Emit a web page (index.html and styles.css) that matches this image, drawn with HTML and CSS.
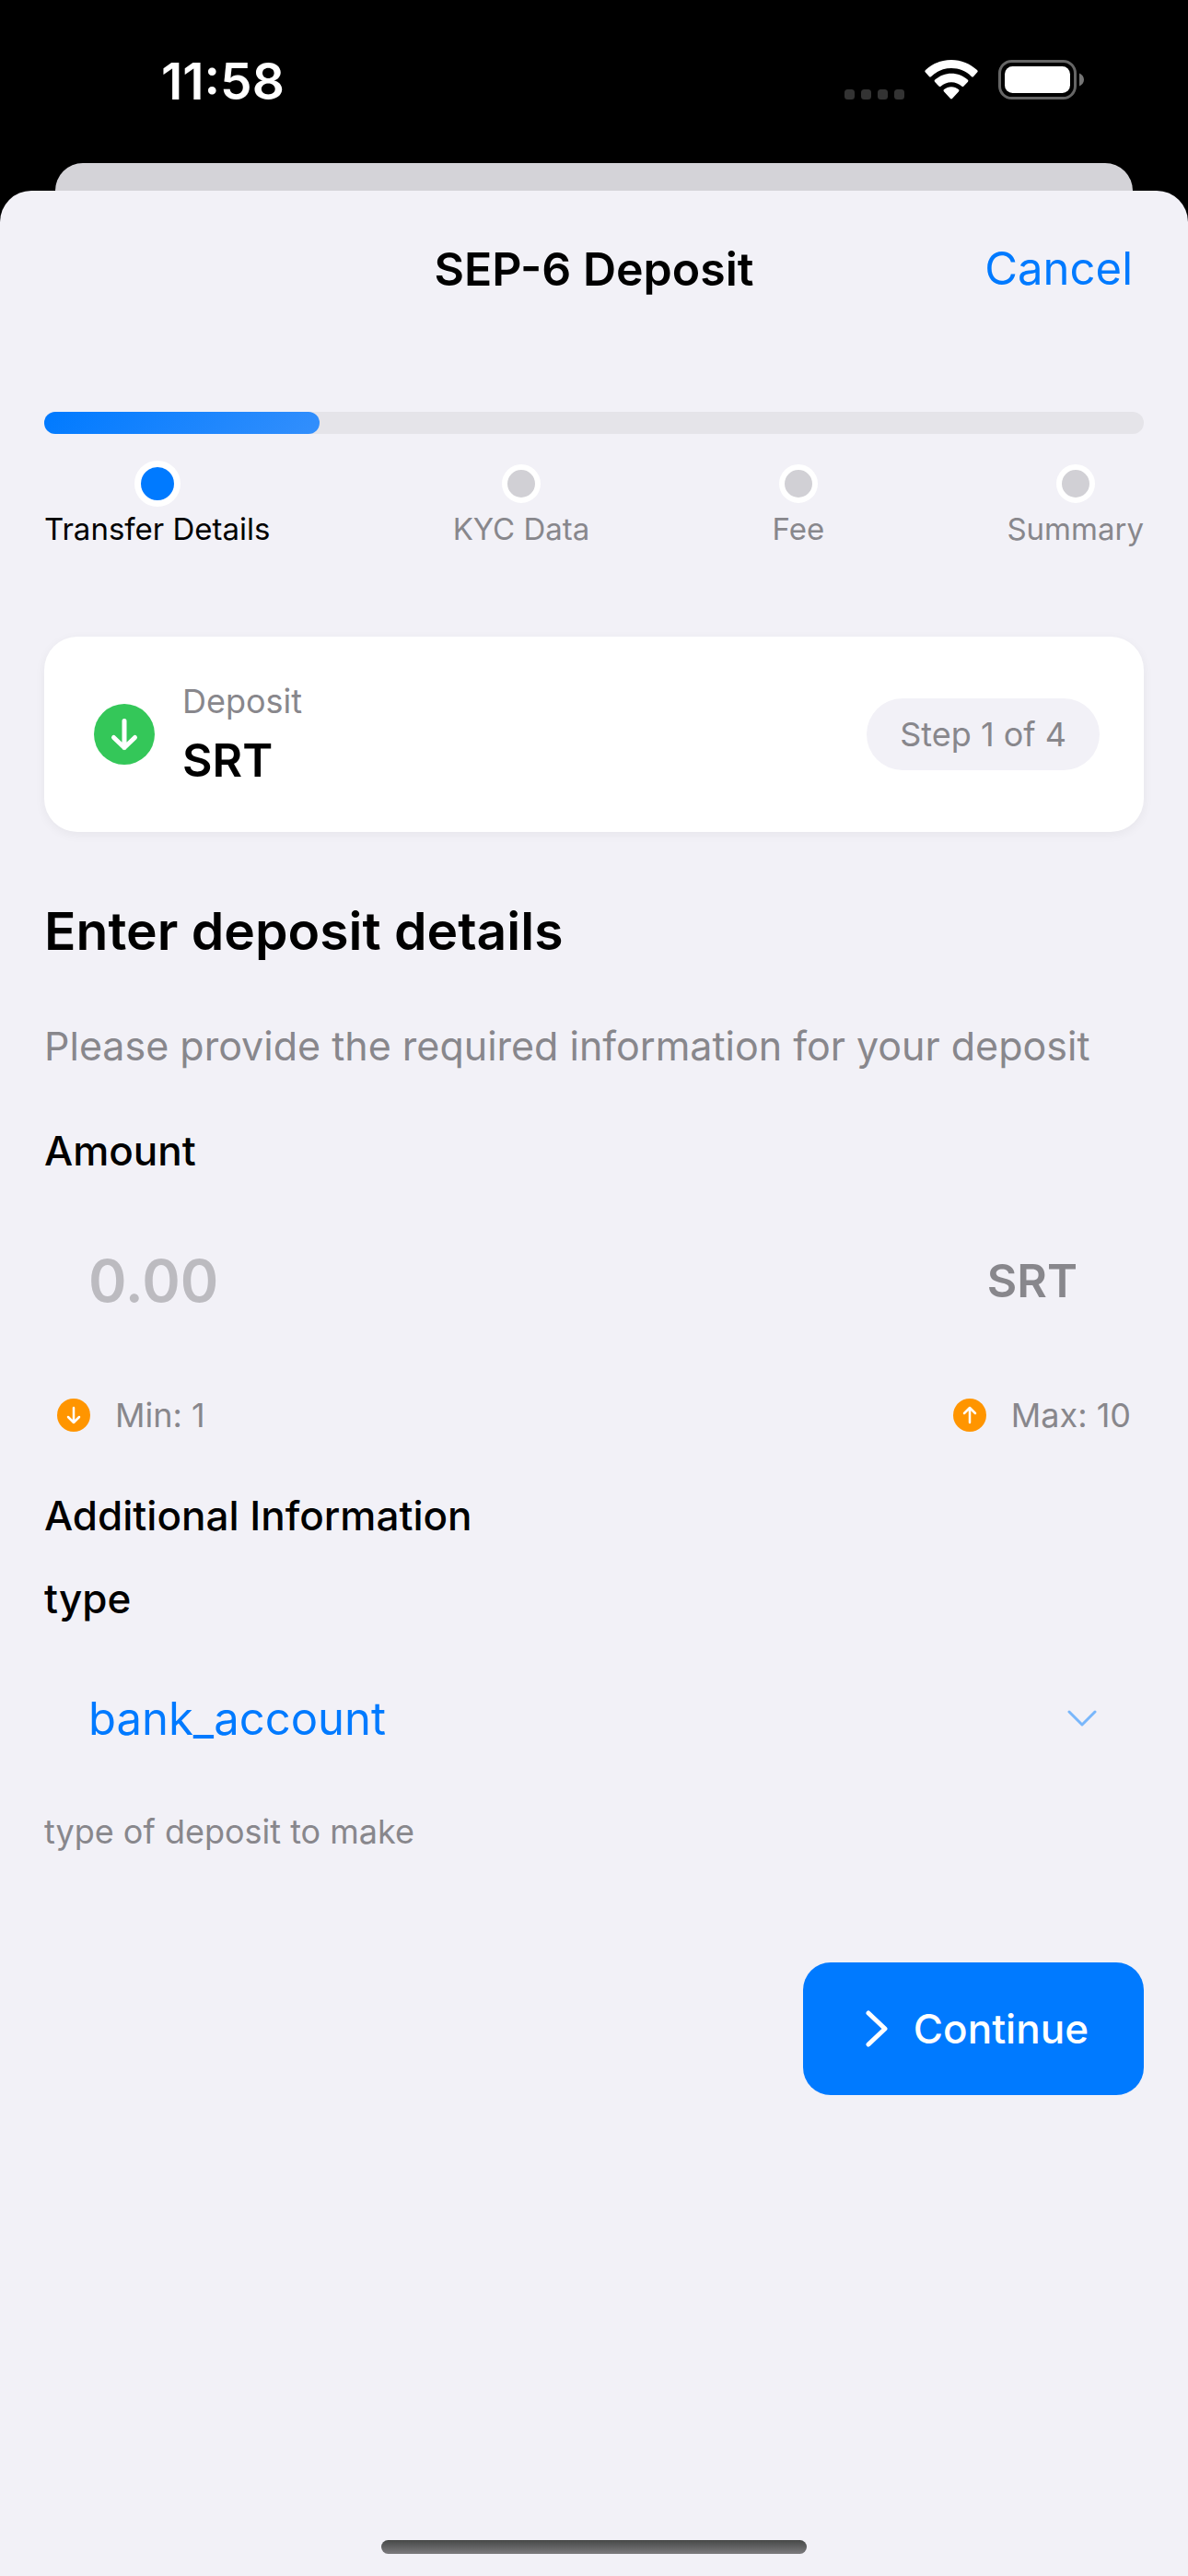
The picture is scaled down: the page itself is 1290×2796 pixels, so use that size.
FILE: index.html
```html
<!DOCTYPE html>
<html lang="en">
<head>
<meta charset="utf-8">
<meta name="viewport" content="width=device-width, initial-scale=1">
<title>SEP-6 Deposit</title>
<link rel="stylesheet" href="styles.css">
</head>
<body>
<header class="status-bar">
  <time class="clock">11:58</time>
  <div class="status-icons">
    <svg class="signal" width="65" height="11" viewBox="0 0 65 11" aria-hidden="true"><g fill="#333"><rect width="11" height="11" rx="3.5"/><rect x="18" width="11" height="11" rx="3.5"/><rect x="36" width="11" height="11" rx="3.5"/><rect x="54" width="11" height="11" rx="3.5"/></g></svg>
    <svg width="58" height="43" viewBox="0 0 58 43" aria-hidden="true"><g fill="#fff"><path d="M29 0c10.800 0 20.600 4.200 28 11.100.9.800.9 1.700.1 2.500l-4 4.300c-.7.700-1.500.7-2.300 0C45 12.400 37.400 9.100 29 9.100S13 12.400 7.200 17.900c-.8.700-1.600.7-2.300 0l-4-4.300c-.8-.8-.8-1.700.1-2.500C8.400 4.200 18.200 0 29 0z"/><path d="M29 14.700c6.800 0 13 2.600 17.700 6.900.9.800.9 1.600.1 2.500l-4.300 4.400c-.8.800-1.500.7-2.300 0-3-2.700-6.900-4.300-11.200-4.300s-8.200 1.600-11.200 4.300c-.8.700-1.500.8-2.300 0l-4.300-4.400c-.8-.9-.8-1.700.1-2.500 4.700-4.300 10.900-6.900 17.700-6.900z"/><path d="M29 29.200c3 0 5.700 1.100 7.800 2.900.9.800.9 1.600.1 2.400l-6.700 7.300c-.8.900-1.600.9-2.400 0l-6.700-7.300c-.8-.8-.8-1.600.1-2.400 2.100-1.800 4.800-2.900 7.800-2.900z"/></g></svg>
    <svg width="93" height="43" viewBox="0 0 93 43" aria-hidden="true"><rect x="1.500" y="1.500" width="82" height="40" rx="13" fill="none" stroke="#666" stroke-width="3"/><rect x="7" y="7" width="71" height="29" rx="8.500" fill="#fff"/><path d="M88 14.500c3 1.200 5 4 5 7s-2 5.800-5 7z" fill="#757575"/></svg>
  </div>
</header>
<div class="sheet-behind"></div>
<div class="sheet">
  <nav class="nav-bar">
    <h1 class="nav-title">SEP-6 Deposit</h1>
    <button class="cancel" type="button">Cancel</button>
  </nav>
  <main class="content">
    <div class="track"><div class="track-fill" style="width:25%"></div></div>
    <ol class="steps">
      <li class="step step-active"><span class="dot-box"><span class="dot"></span></span>Transfer Details</li>
      <li class="step"><span class="dot-box"><span class="dot"></span></span>KYC Data</li>
      <li class="step"><span class="dot-box"><span class="dot"></span></span>Fee</li>
      <li class="step"><span class="dot-box"><span class="dot"></span></span>Summary</li>
    </ol>

    <section class="card">
      <svg width="66" height="66" viewBox="0 0 66 66" aria-hidden="true"><circle cx="33" cy="33" r="33" fill="#34c759"/><path d="M33 18.500v29M21.500 36.500L33 47.500l11.500-11" fill="none" stroke="#fff" stroke-width="5" stroke-linecap="round" stroke-linejoin="round"/></svg>
      <div class="card-text">
        <span class="card-label">Deposit</span>
        <strong class="card-asset">SRT</strong>
      </div>
      <span class="pill">Step 1 of 4</span>
    </section>

    <h2 class="heading">Enter deposit details</h2>
    <p class="lead">Please provide the required information for your deposit</p>

    <form class="form">
      <label class="field-label" for="amount">Amount</label>
      <div class="amount-row">
        <input class="amount" id="amount" type="text" inputmode="decimal" placeholder="0.00">
        <span class="unit">SRT</span>
      </div>
      <div class="limits">
        <span class="limit"><svg width="36" height="36" viewBox="0 0 36 36" aria-hidden="true"><circle cx="18" cy="18" r="18" fill="#ff9500"/><path d="M18 10v16M12 20l6 6 6-6" fill="none" stroke="#fff" stroke-width="2.500" stroke-linecap="round" stroke-linejoin="round"/></svg>Min: 1</span>
        <span class="limit"><svg width="36" height="36" viewBox="0 0 36 36" aria-hidden="true"><circle cx="18" cy="18" r="18" fill="#ff9500"/><path d="M18 26V10M12 16l6-6 6 6" fill="none" stroke="#fff" stroke-width="2.500" stroke-linecap="round" stroke-linejoin="round"/></svg>Max: 10</span>
      </div>

      <h3 class="section-title">Additional Information</h3>
      <label class="field-label" for="type">type</label>
      <div class="select-row">
        <select class="select" id="type"><option>bank_account</option></select>
        <svg class="select-arrow" width="32" height="18" viewBox="0 0 32 18" aria-hidden="true"><path d="M2 2l14 14L30 2" fill="none" stroke="#79b7fb" stroke-width="3" stroke-linecap="round" stroke-linejoin="round"/></svg>
      </div>
      <p class="hint">type of deposit to make</p>

      <button class="continue" type="button">
        <svg width="24" height="40" viewBox="0 0 24 40" aria-hidden="true"><path d="M3 3l18 17L3 37" fill="none" stroke="#fff" stroke-width="5" stroke-linecap="round" stroke-linejoin="round"/></svg>
        Continue
      </button>
    </form>
  </main>
  <div class="home-indicator"></div>
</div>
</body>
</html>
```
FILE: styles.css
```css
* {
  box-sizing: border-box;
}

body {
  margin: 0;
  min-height: 100vh;
  display: flex;
  flex-direction: column;
  background: #000;
  color: #000;
  font-family: Inter, "Liberation Sans", sans-serif;
}

h1, h2, h3, p, ol {
  margin: 0;
  padding: 0;
}

button, input, select {
  padding: 0;
  border: 0;
  background: none;
  font-family: inherit;
}

svg {
  flex: none;
}

.status-bar {
  display: flex;
  justify-content: space-between;
  align-items: flex-start;
  height: 177px;
  padding: 58px 113px 0 175px;
  color: #fff;
}

.clock {
  font-size: 55px;
  font-weight: 600;
  line-height: 60px;
}

.status-icons {
  display: flex;
  align-items: flex-end;
  gap: 22px;
  padding-top: 7px;
}

.sheet-behind {
  height: 30px;
  margin: 0 60px;
  border-radius: 30px 30px 0 0;
  background: #d4d3d8;
}

.sheet {
  flex: 1;
  display: flex;
  flex-direction: column;
  border-radius: 34px 34px 0 0;
  background: #f2f1f7;
}

.nav-bar {
  display: grid;
  grid-template-columns: 1fr auto 1fr;
  align-items: center;
  height: 170px;
  padding: 0 60px;
}

.nav-title {
  grid-column: 2;
  font-size: 50px;
  font-weight: 600;
  line-height: 60px;
}

.cancel {
  justify-self: end;
  color: #007aff;
  font-size: 49px;
  line-height: 60px;
}

.content {
  padding: 70px 48px 0;
}

.track {
  height: 24px;
  border-radius: 12px;
  background: #e5e4e9;
}

.track-fill {
  height: 24px;
  border-radius: 12px;
  background: linear-gradient(135deg, #007aff, #338ffc);
}

.steps {
  display: flex;
  justify-content: space-between;
  margin-top: 29px;
  list-style: none;
}

.step {
  display: flex;
  flex-direction: column;
  align-items: center;
  gap: 4px;
  color: #88878c;
  font-size: 33px;
  line-height: 40px;
}

.step-active {
  color: #000;
}

.dot-box {
  display: grid;
  place-items: center;
  height: 50px;
}

.dot {
  width: 42px;
  height: 42px;
  border: 6px solid #fff;
  border-radius: 50%;
  background: #d1d0d5;
}

.step-active .dot {
  width: 50px;
  height: 50px;
  border-width: 7px;
  background: #007aff;
}

.card {
  display: flex;
  align-items: center;
  gap: 30px;
  height: 212px;
  margin-top: 97px;
  padding: 0 48px 0 54px;
  border-radius: 36px;
  background: #fff;
  box-shadow: 0 3px 12px rgba(0, 0, 0, 0.05);
}

.card-text {
  display: flex;
  flex-direction: column;
  gap: 12px;
}

.card-label {
  color: #88878c;
  font-size: 36px;
  line-height: 44px;
}

.card-asset {
  font-size: 50px;
  font-weight: 600;
  line-height: 60px;
}

.pill {
  margin-left: auto;
  padding: 17px 36px;
  border-radius: 39px;
  background: #f2f1f7;
  color: #88878c;
  font-size: 36px;
  line-height: 44px;
}

.heading {
  margin-top: 72px;
  font-size: 57px;
  font-weight: 600;
  line-height: 72px;
}

.lead {
  margin-top: 60px;
  color: #88878c;
  font-size: 43px;
  line-height: 56px;
}

.form {
  display: flex;
  flex-direction: column;
  margin-top: 58px;
}

.field-label,
.section-title {
  font-size: 44px;
  font-weight: 500;
  line-height: 56px;
}

.amount-row {
  display: flex;
  align-items: center;
  height: 144px;
  margin-top: 41px;
  padding: 0 72px 0 48px;
}

.amount {
  flex: 1;
  min-width: 0;
  color: #000;
  font-size: 63px;
  font-weight: 600;
}

.amount::placeholder {
  color: #bcbbc0;
  opacity: 1;
}

.unit {
  color: #88878c;
  font-size: 50px;
  font-weight: 600;
  line-height: 60px;
}

.limits {
  display: flex;
  justify-content: space-between;
  margin-top: 52px;
  padding: 0 14px;
}

.limit {
  display: flex;
  align-items: center;
  gap: 27px;
  color: #88878c;
  font-size: 36px;
  line-height: 44px;
}

.section-title {
  margin: 59px 0 34px;
}

.select-row {
  display: grid;
  align-items: center;
  height: 132px;
  margin-top: 36px;
}

.select {
  grid-area: 1 / 1;
  width: 100%;
  height: 100%;
  padding: 0 48px;
  appearance: none;
  color: #007aff;
  font-size: 49px;
}

.select-arrow {
  grid-area: 1 / 1;
  justify-self: end;
  margin-right: 51px;
  pointer-events: none;
}

.hint {
  margin-top: 35px;
  color: #88878c;
  font-size: 36px;
  line-height: 44px;
}

.continue {
  display: flex;
  align-items: center;
  align-self: flex-end;
  gap: 28px;
  height: 144px;
  margin-top: 120px;
  padding: 0 60px 0 68px;
  border-radius: 30px;
  background: #007aff;
  color: #fff;
  font-size: 44px;
  font-weight: 500;
}

.home-indicator {
  width: 462px;
  height: 15px;
  margin: auto auto 24px;
  border-radius: 8px;
  background: linear-gradient(#464847, #7c7b7e);
}
```
